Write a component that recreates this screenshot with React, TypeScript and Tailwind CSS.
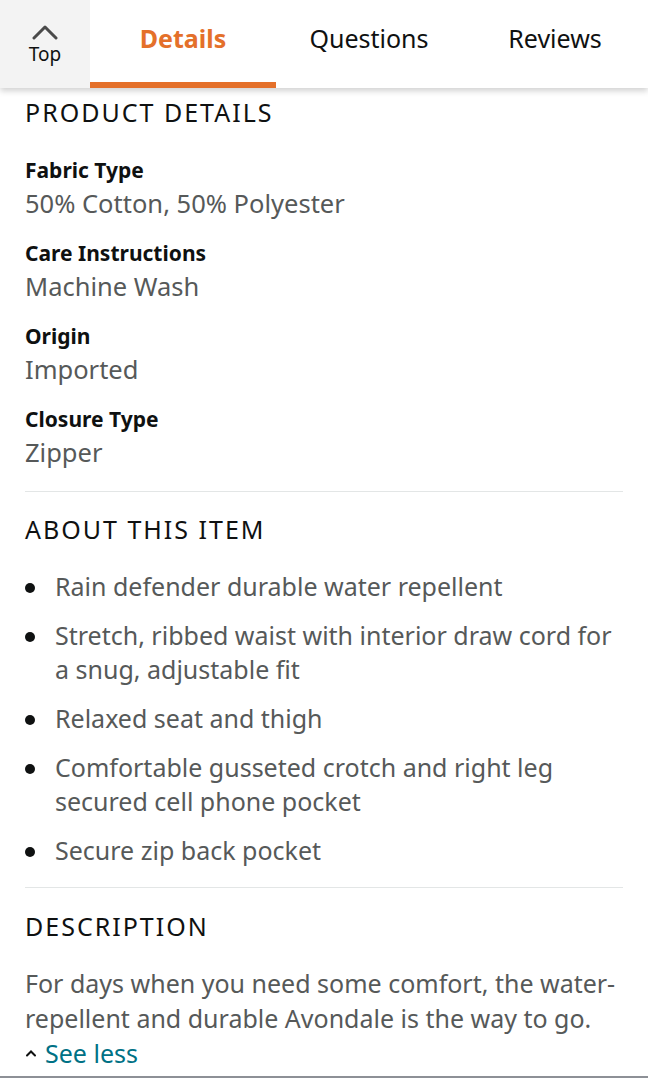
import React from "react";

const font = { fontFamily: '"Noto Sans", "Open Sans", sans-serif' };

function Detail({ label, value }: { label: string; value: string }) {
  return (
    <div className="flex flex-col">
      <div className="text-[21px] leading-[32px] font-bold text-[#0f1111]">{label}</div>
      <div className="text-[25.5px] leading-[34px] text-[#565959]">{value}</div>
    </div>
  );
}

function Bullet({ children }: { children: React.ReactNode }) {
  return (
    <li className="flex gap-[20px]">
      <span className="mt-[14px] h-[10px] w-[10px] shrink-0 rounded-full bg-[#0f1111]" />
      <span className="text-[25px] leading-[34px] text-[#565959]">{children}</span>
    </li>
  );
}

export default function App() {
  return (
    <div className="w-[648px] h-[1080px] bg-white overflow-hidden relative" style={font}>
      <div className="relative z-10 flex h-[88px] bg-white shadow-[0_3px_6px_rgba(0,0,0,0.18)]">
        <div className="flex w-[90px] flex-col items-center justify-center bg-[#f3f3f3] pt-[4px]">
          <svg width="26" height="16" viewBox="0 0 26 16" fill="none">
            <path d="M2 14 L13 3 L24 14" stroke="#4a4a4a" strokeWidth="3" strokeLinecap="round" strokeLinejoin="round" />
          </svg>
          <span className="text-[19px] leading-[28px] text-[#0f1111]">Top</span>
        </div>
        <div className="relative flex w-[186px] items-center justify-center">
          <span className="text-[25px] font-bold text-[#e4702a] -mt-[10px]">Details</span>
          <div className="absolute bottom-0 left-0 right-0 h-[6px] bg-[#e4702a]" />
        </div>
        <div className="flex w-[186px] items-center justify-center">
          <span className="text-[25px] text-[#0f1111] -mt-[10px]">Questions</span>
        </div>
        <div className="flex w-[186px] items-center justify-center">
          <span className="text-[25px] text-[#0f1111] -mt-[10px]">Reviews</span>
        </div>
      </div>

      <div className="px-[25px]">
        <h2 className="pt-[7px] text-[25px] leading-[34px] tracking-[2px] text-[#0f1111]">PRODUCT DETAILS</h2>
        <div className="mt-[25px] flex flex-col gap-[17px] pb-[22px]">
          <Detail label="Fabric Type" value="50% Cotton, 50% Polyester" />
          <Detail label="Care Instructions" value="Machine Wash" />
          <Detail label="Origin" value="Imported" />
          <Detail label="Closure Type" value="Zipper" />
        </div>
        <div className="h-[1px] bg-[#e3e6e6]" />

        <h2 className="mt-[20px] text-[25px] leading-[34px] tracking-[2px] text-[#0f1111]">ABOUT THIS ITEM</h2>
        <ul className="mt-[23px] flex flex-col gap-[15px] pb-[20px]">
          <Bullet>Rain defender durable water repellent</Bullet>
          <Bullet>Stretch, ribbed waist with interior draw cord for a snug, adjustable fit</Bullet>
          <Bullet>Relaxed seat and thigh</Bullet>
          <Bullet>Comfortable gusseted crotch and right leg secured cell phone pocket</Bullet>
          <Bullet>Secure zip back pocket</Bullet>
        </ul>
        <div className="h-[1px] bg-[#e3e6e6]" />

        <h2 className="mt-[21px] text-[25px] leading-[34px] tracking-[2px] text-[#0f1111]">DESCRIPTION</h2>
        <p className="mt-[23px] text-[25px] leading-[35px] text-[#565959]">
          For days when you need some comfort, the water-
          <br />
          repellent and durable Avondale is the way to go.
        </p>
        <div className="flex items-center gap-[8px]">
          <svg width="12" height="8" viewBox="0 0 12 8" fill="none">
            <path d="M2 6.5 L6 2.5 L10 6.5" stroke="#0f1111" strokeWidth="2" strokeLinecap="round" />
          </svg>
          <span className="text-[25px] leading-[34px] text-[#007185]">See less</span>
        </div>
      </div>
      <div className="absolute left-0 right-0 top-[1076px] h-[2px] bg-[#8d9096]" />
    </div>
  );
}
